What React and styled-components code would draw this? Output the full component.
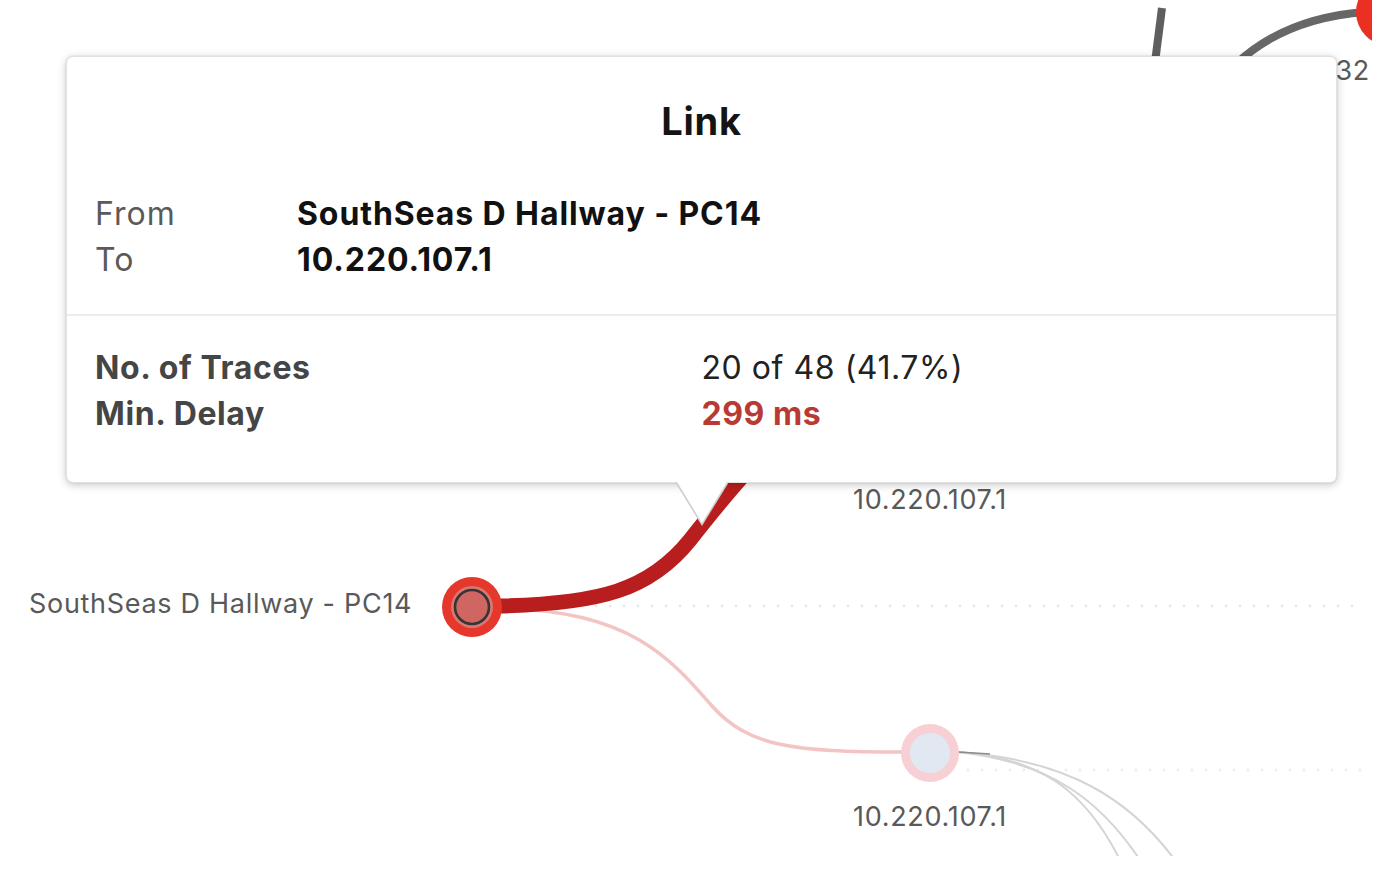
import React from "react";
import styled, { createGlobalStyle } from "styled-components";

const Global = createGlobalStyle`
  html, body { margin: 0; padding: 0; background: #fff; }
  body { font-family: Inter, "Noto Sans", "Liberation Sans", sans-serif; }
`;

const Page = styled.div`
  position: relative;
  width: 1382px;
  height: 876px;
  overflow: hidden;
  background: #fff;
`;

const Graph = styled.svg`
  position: absolute;
  left: 0;
  top: 0;
  width: 1372px;
  height: 856px;
`;

const NodeLabel = styled.text`
  font-family: Inter, "Noto Sans", sans-serif;
  font-size: 27px;
  letter-spacing: 0.7px;
  fill: #595959;
`;

const Tooltip = styled.div`
  position: absolute;
  left: 66px;
  top: 56px;
  width: 1271px;
  box-sizing: border-box;
  background: #fff;
  border: 1px solid #e2e2e2;
  border-radius: 7px;
  box-shadow: 0 2px 8px rgba(0, 0, 0, 0.22), 0 0 2px rgba(0, 0, 0, 0.12);

  &::before {
    content: "";
    position: absolute;
    left: 608px;
    bottom: -44px;
    border-left: 27px solid transparent;
    border-right: 27px solid transparent;
    border-top: 44px solid #cfcfcf;
  }
  &::after {
    content: "";
    position: absolute;
    left: 610px;
    bottom: -41px;
    border-left: 25px solid transparent;
    border-right: 25px solid transparent;
    border-top: 41px solid #fff;
  }
`;

const Header = styled.div`
  padding: 42px 28px 31px;
  border-bottom: 2px solid #ececec;
`;

const Title = styled.div`
  text-align: center;
  font-size: 38px;
  letter-spacing: 0.8px;
  line-height: 44px;
  font-weight: 700;
  color: #141414;
  margin-bottom: 48px;
`;

const PairGrid = styled.div`
  display: grid;
  grid-template-columns: ${(p) => p.$cols};
  font-size: 32px;
  line-height: 46px;
`;

const Label = styled.div`
  color: ${(p) => (p.$strong ? "#454545" : "#5a5a5a")};
  font-weight: ${(p) => (p.$strong ? 700 : 400)};
  letter-spacing: ${(p) => (p.$strong ? "0.6px" : "1px")};
`;

const Value = styled.div`
  color: ${(p) => (p.$alert ? "#b83a32" : p.$strong ? "#111" : "#222")};
  font-weight: ${(p) => (p.$strong || p.$alert ? 700 : 400)};
  letter-spacing: ${(p) => (p.$strong ? "0.9px" : "0.55px")};
`;

const Body = styled.div`
  padding: 29px 28px 45px;
`;

export default function App() {
  const dotsA = [];
  for (let x = 512; x < 1366; x += 14) dotsA.push(x);
  const dotsB = [];
  for (let x = 968; x < 1366; x += 14) dotsB.push(x);
  return (
    <Page>
      <Global />
      <Graph viewBox="0 0 1372 856">
        {/* dotted guides */}
        {dotsA.map((x) => (
          <circle key={"a" + x} cx={x} cy={606} r={1.4} fill="#e8e8e8" />
        ))}
        {dotsB.map((x) => (
          <circle key={"b" + x} cx={x} cy={770} r={1.4} fill="#eeeeee" />
        ))}

        {/* top gray links */}
        <path d="M1162 8 L1154 70" stroke="#5f5f5f" strokeWidth="8" fill="none" />
        <path d="M1236 64 C1268 34 1310 16 1366 12" stroke="#676767" strokeWidth="8" fill="none" />
        <circle cx="1390" cy="12" r="34" fill="#ec2f23" />
        <NodeLabel x="1370" y="80" textAnchor="end">10.220.107.32</NodeLabel>

        {/* faint pink link to lower node */}
        <path
          d="M505 609 C630 610 672 660 712 706 C748 746 790 752 905 752"
          stroke="#f2c4c4"
          strokeWidth="3.5"
          fill="none"
        />

        {/* thick red link */}
        <path
          d="M498 606 C600 604 650 590 690 540 C712 512 730 490 752 466"
          stroke="#b91e1e"
          strokeWidth="15"
          fill="none"
        />

        {/* lower-right gray links */}
        <path d="M958 752 C1040 758 1085 790 1120 860" stroke="#d4d4d4" strokeWidth="2" fill="none" />
        <path d="M958 752 C1050 762 1100 800 1140 860" stroke="#d4d4d4" strokeWidth="2" fill="none" />
        <path d="M958 752 C1070 760 1130 800 1175 860" stroke="#d4d4d4" strokeWidth="2" fill="none" />
        <path d="M958 752 L990 754" stroke="#8a8a8a" strokeWidth="1.5" fill="none" />

        {/* source node */}
        <circle cx="472" cy="607" r="30" fill="#e5372b" />
        <circle cx="472" cy="607" r="21" fill="#d97770" />
        <circle cx="472" cy="607" r="17" fill="#d06661" stroke="#353535" strokeWidth="2.6" />

        {/* lower node */}
        <circle cx="930" cy="753" r="29" fill="#f6d0d4" />
        <circle cx="930" cy="753" r="20" fill="#e1e8f1" />

        <NodeLabel x="29" y="613">SouthSeas D Hallway - PC14</NodeLabel>
        <NodeLabel x="853" y="509">10.220.107.1</NodeLabel>
        <NodeLabel x="853" y="826">10.220.107.1</NodeLabel>
      </Graph>

      <Tooltip>
        <Header>
          <Title>Link</Title>
          <PairGrid $cols="202px 1fr">
            <Label>From</Label>
            <Value $strong>SouthSeas D Hallway - PC14</Value>
            <Label>To</Label>
            <Value $strong>10.220.107.1</Value>
          </PairGrid>
        </Header>
        <Body>
          <PairGrid $cols="1fr 1fr">
            <Label $strong>No. of Traces</Label>
            <Value>20 of 48 (41.7%)</Value>
            <Label $strong>Min. Delay</Label>
            <Value $alert>299 ms</Value>
          </PairGrid>
        </Body>
      </Tooltip>
    </Page>
  );
}
